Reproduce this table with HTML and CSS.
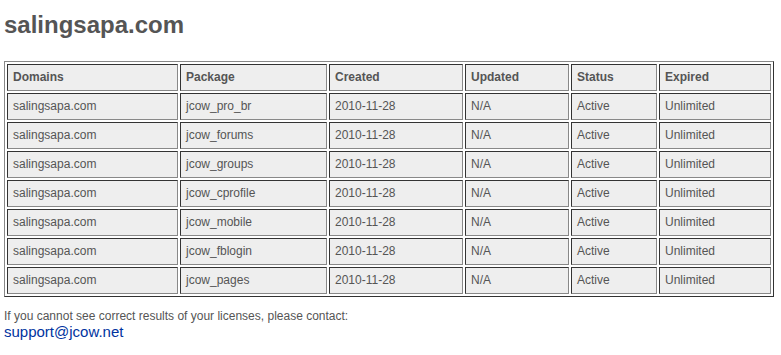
FILE: index.html
```html
<!DOCTYPE html>
<html lang="en">
<head>
    <meta charset="UTF-8">
    <title>salingsapa.com - Licenses</title>
    <link rel="stylesheet" href="styles.css">
</head>
<body>
    <h1>salingsapa.com</h1>

    <table class="licenses">
        <tr>
            <th class="col-domain">Domains</th>
            <th class="col-package">Package</th>
            <th class="col-created">Created</th>
            <th class="col-updated">Updated</th>
            <th class="col-status">Status</th>
            <th class="col-expired">Expired</th>
        </tr>
        <tr>
            <td>salingsapa.com</td><td>jcow_pro_br</td><td>2010-11-28</td><td>N/A</td><td>Active</td><td>Unlimited</td>
        </tr>
        <tr>
            <td>salingsapa.com</td><td>jcow_forums</td><td>2010-11-28</td><td>N/A</td><td>Active</td><td>Unlimited</td>
        </tr>
        <tr>
            <td>salingsapa.com</td><td>jcow_groups</td><td>2010-11-28</td><td>N/A</td><td>Active</td><td>Unlimited</td>
        </tr>
        <tr>
            <td>salingsapa.com</td><td>jcow_cprofile</td><td>2010-11-28</td><td>N/A</td><td>Active</td><td>Unlimited</td>
        </tr>
        <tr>
            <td>salingsapa.com</td><td>jcow_mobile</td><td>2010-11-28</td><td>N/A</td><td>Active</td><td>Unlimited</td>
        </tr>
        <tr>
            <td>salingsapa.com</td><td>jcow_fblogin</td><td>2010-11-28</td><td>N/A</td><td>Active</td><td>Unlimited</td>
        </tr>
        <tr>
            <td>salingsapa.com</td><td>jcow_pages</td><td>2010-11-28</td><td>N/A</td><td>Active</td><td>Unlimited</td>
        </tr>
    </table>

    <p class="note">If you cannot see correct results of your licenses, please contact:</p>
    <a class="support" href="mailto:support@jcow.net">support@jcow.net</a>
</body>
</html>
```

FILE: styles.css
```css
* {
    box-sizing: border-box;
}

body {
    margin: 4px;
    font-family: "Liberation Sans", Arial, sans-serif;
    font-size: 12px;
    color: #555;
    background: #fff;
}

h1 {
    margin: 7px 0 22px;
    font-size: 24px;
    line-height: 28px;
    color: #555;
}

.licenses {
    border-collapse: separate;
    border-spacing: 2px;
    border: 1px solid;
    border-color: #888 #333 #333 #888;
    table-layout: fixed;
}

.licenses th,
.licenses td {
    height: 27px;
    padding: 5px 5px;
    line-height: 15px;
    text-align: left;
    background: #eee;
    border: 1px solid;
    border-color: #333 #888 #888 #333;
    white-space: nowrap;
}

.licenses th {
    font-weight: bold;
}

.col-domain { width: 171px; }
.col-package { width: 147px; }
.col-created { width: 134px; }
.col-updated { width: 104px; }
.col-status { width: 86px; }
.col-expired { width: 112px; }

.note {
    margin: 12px 0 0;
    line-height: 14px;
}

.support {
    display: block;
    font-size: 15px;
    line-height: 17px;
    color: #0033a0;
    text-decoration: none;
}
```
